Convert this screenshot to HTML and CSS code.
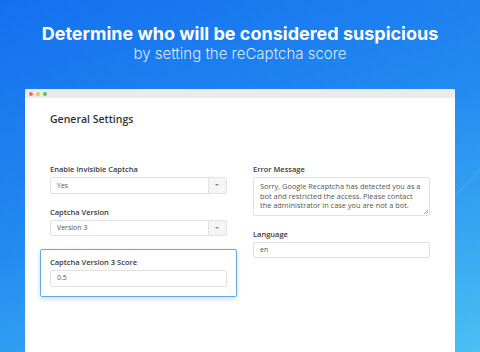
FILE: index.html
```html
<!DOCTYPE html>
<html lang="en">
<head>
    <meta charset="UTF-8">
    <meta name="viewport" content="width=device-width, initial-scale=1.0">
    <title>reCaptcha Score</title>
    <link rel="stylesheet" href="styles.css">
</head>
<body>
    <div class="hero">
        <h1>Determine who will be considered suspicious</h1>
        <p>by setting the reCaptcha score</p>
    </div>

    <div class="window">
        <div class="titlebar">
            <span class="dot red"></span>
            <span class="dot yellow"></span>
            <span class="dot green"></span>
        </div>
        <div class="content">
            <h2>General Settings</h2>
            <div class="form">
                <div class="column">
                    <div class="field">
                        <label>Enable Invisible Captcha</label>
                        <div class="select">
                            <span>Yes</span>
                            <span class="arrow"></span>
                        </div>
                    </div>
                    <div class="field">
                        <label>Captcha Version</label>
                        <div class="select">
                            <span>Version 3</span>
                            <span class="arrow"></span>
                        </div>
                    </div>
                    <div class="field highlight">
                        <label>Captcha Version 3 Score</label>
                        <div class="input">0.5</div>
                    </div>
                </div>
                <div class="column">
                    <div class="field">
                        <label>Error Message</label>
                        <div class="textarea">Sorry, Google Recaptcha has detected you as a bot and restricted the access. Please contact the administrator in case you are not a bot.<span class="grip"></span></div>
                    </div>
                    <div class="field">
                        <label>Language</label>
                        <div class="input">en</div>
                    </div>
                </div>
            </div>
        </div>
    </div>
</body>
</html>
```

FILE: styles.css
```css
body {
    margin: 0;
    width: 480px;
    height: 352px;
    overflow: hidden;
    font-family: 'Open Sans', sans-serif;
    background:
        linear-gradient(135deg, transparent 78%, rgba(255,255,255,0.08) 78.2%, transparent 78.4%),
        linear-gradient(160deg, #1570ef 0%, #2188f0 45%, #3aa9f2 80%, #4bc0f2 100%);
}

.hero {
    padding-top: 23px;
    height: 66px;
    box-sizing: border-box;
    text-align: center;
    color: #fff;
    font-family: 'Inter', sans-serif;
}

.hero h1 {
    margin: 0;
    font-size: 18px;
    line-height: 21px;
    font-weight: 700;
}

.hero p {
    margin: 1px 0 0;
    font-size: 15px;
    line-height: 18px;
    font-weight: 300;
    color: rgba(255, 255, 255, 0.85);
}

.window {
    margin-top: 23px;
    margin-left: 25px;
    width: 430px;
    height: 263px;
    background: #fff;
    border-radius: 2px 2px 0 0;
}

.titlebar {
    height: 9px;
    background: #ebebed;
    border-radius: 2px 2px 0 0;
    display: flex;
    align-items: center;
    gap: 3px;
    padding-left: 4px;
}

.dot {
    width: 4px;
    height: 4px;
    border-radius: 50%;
}

.red { background: #ea6b66; }
.yellow { background: #f2c443; }
.green { background: #5ec15d; }

.content {
    padding: 14px 25px 0;
}

h2 {
    margin: 0;
    font-size: 10.5px;
    line-height: 14px;
    font-weight: 600;
    color: #333;
}

.form {
    margin-top: 38px;
    display: flex;
    gap: 26px;
}

.column {
    width: 177px;
}

.field {
    margin-bottom: 13px;
}

label {
    display: block;
    font-size: 7.5px;
    line-height: 10px;
    font-weight: 600;
    color: #3a3a3a;
    margin-bottom: 3px;
}

.select, .input, .textarea {
    box-sizing: border-box;
    border: 1px solid #e2e2e2;
    border-radius: 2px;
    font-size: 7px;
    color: #555;
    background: #fff;
}

.select {
    height: 16.5px;
    display: flex;
    align-items: center;
    justify-content: space-between;
    padding-left: 6px;
}

.arrow {
    width: 17px;
    height: 100%;
    background: #f5f5f5;
    border-left: 1px solid #e2e2e2;
    position: relative;
}

.arrow::after {
    content: '';
    position: absolute;
    left: 6px;
    top: 6px;
    border-left: 2.5px solid transparent;
    border-right: 2.5px solid transparent;
    border-top: 2.5px solid #888;
}

.input {
    height: 16.5px;
    line-height: 14.5px;
    padding-left: 6px;
}

.textarea {
    position: relative;
    height: 38.5px;
    padding: 4px 6px;
    line-height: 9.6px;
    font-size: 7.4px;
}

.grip {
    position: absolute;
    right: 1px;
    bottom: 1px;
    width: 4px;
    height: 4px;
    background: linear-gradient(135deg, transparent 45%, #aaa 50%, transparent 55%, transparent 70%, #aaa 75%, transparent 80%);
}

.highlight {
    margin: 13px -10px 0;
    padding: 7px 9px 9px;
    border: 1px solid #6aa6e4;
    border-radius: 2px;
    box-shadow: 0 2px 5px rgba(60, 140, 230, 0.3);
}
```
